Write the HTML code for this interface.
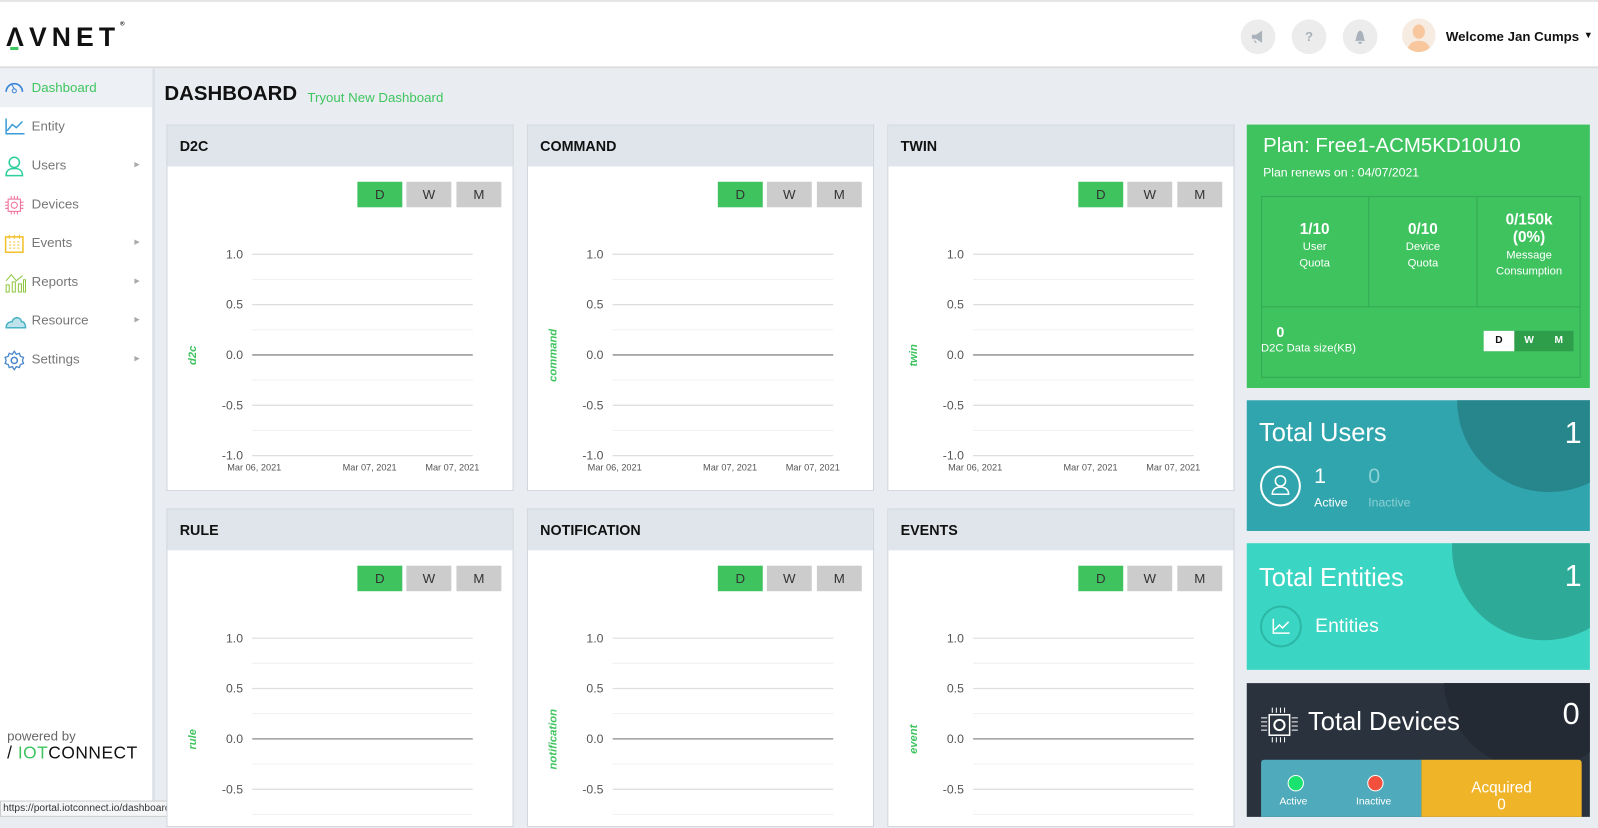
<!DOCTYPE html>
<html><head><meta charset="utf-8"><style>
*{box-sizing:border-box;margin:0;padding:0}
html,body{width:1598px;height:815px;overflow:hidden;background:#e9edf2;font-family:"Liberation Sans",sans-serif}
#w{position:absolute;left:0;top:0;width:1566px;height:800px;transform:scale(1.0211);transform-origin:0 0;background:#e9edf2}
.a{position:absolute}
#hdr{left:0;top:0;width:1566px;height:67px;background:#fff;border-top:2px solid #e6e6e6;border-bottom:2px solid #dcdcdc}
#side{left:0;top:67px;width:152px;height:733px;background:#fff;border-right:3px solid #dde2e8}
.mi{position:absolute;left:0;width:149px;height:38px;font-size:13px;color:#777;padding-left:31px;line-height:38px}
.mi svg{position:absolute;left:4px;top:10px}
.arr{position:absolute;right:12px;top:0;font-size:7px;color:#aaa}
.card{position:absolute;width:340px;background:#fff;border:1px solid #cfd5db}
.ch{height:40px;background:#dfe5ea;font-size:14px;font-weight:bold;color:#111;padding:12px 0 0 12px}
.btn{position:absolute;top:55px;height:25px;width:44px;text-align:center;line-height:25px;font-size:13px;color:#333;background:#cccccc}
.ic{position:absolute;top:17px;width:34px;height:34px;border-radius:50%;background:#ececec}
</style></head><body><div id="w">
<div id="hdr" class="a">
 <div class="a" style="left:6px;top:19px;font-size:26px;font-weight:bold;letter-spacing:5px;color:#111">ΛVNET<span style="font-size:6px;vertical-align:top">®</span></div>
 <div class="a" style="left:10px;top:44px;width:8px;height:3px;background:#3fc55f"></div>
 <div class="ic" style="left:1215px"><svg width="34" height="34"><path d="M11 15h4l6-4v12l-6-4h-4z M13 19l1 4h2" fill="#a9b2ba"/></svg></div>
 <div class="ic" style="left:1265px;text-align:center;line-height:34px;font-weight:bold;font-size:13px;color:#a9b2ba">?</div>
 <div class="ic" style="left:1315px"><svg width="34" height="34"><path d="M12 21c2-2 1-9 5-10 4 1 3 8 5 10z M15 22a2 2 0 0 0 4 0" fill="#a9b2ba"/></svg></div>
 <div class="a" style="left:1373px;top:16px;width:33px;height:33px;border-radius:50%;background:#f6ece2;overflow:hidden"><svg width="33" height="33"><ellipse cx="16.5" cy="13" rx="6" ry="7" fill="#f8c79e"/><path d="M5 33c1-9 6-11 11.5-11S27 24 28 33z" fill="#f8c79e"/></svg></div>
 <div class="a" style="left:1416px;top:26px;font-size:13px;font-weight:bold;color:#111">Welcome Jan Cumps</div>
 <div class="a" style="left:1551px;top:27px;font-size:9px;color:#111">▼</div>
</div>
<div id="side" class="a">
 <div class="mi" style="top:0;background:#edf1f5;color:#3fc55f">Dashboard<svg width="20" height="16"><path d="M2 13a8 8 0 1 1 16 0" stroke="#3a84d6" stroke-width="1.6" fill="none"/><circle cx="10" cy="12" r="2" stroke="#3a84d6" fill="none"/><path d="M10 10l-3-5" stroke="#3a84d6"/></svg></div>
 <div class="mi" style="top:38px">Entity<svg width="20" height="18"><path d="M2 1v15h18M3 13l5-6 4 3 6-6" stroke="#3a9bd6" stroke-width="1.5" fill="none"/></svg></div>
 <div class="mi" style="top:76px">Users<span class="arr">▶</span><svg width="20" height="20"><circle cx="10" cy="6" r="5" stroke="#2bcf9c" stroke-width="1.5" fill="none"/><path d="M2 19c0-6 4-7 8-7s8 1 8 7z" stroke="#2bcf9c" stroke-width="1.5" fill="none"/></svg></div>
 <div class="mi" style="top:114px">Devices<svg width="20" height="20"><rect x="4" y="4" width="12" height="12" stroke="#ef6f9a" fill="none"/><circle cx="10" cy="10" r="3" stroke="#ef6f9a" fill="none"/><path d="M7 1v3M10 1v3M13 1v3M7 16v3M10 16v3M13 16v3M1 7h3M1 10h3M1 13h3M16 7h3M16 10h3M16 13h3" stroke="#ef6f9a"/></svg></div>
 <div class="mi" style="top:152px">Events<span class="arr">▶</span><svg width="20" height="20"><rect x="1.5" y="3" width="17" height="15" stroke="#f4c12a" stroke-width="1.5" fill="none"/><path d="M5 1v4M10 1v4M15 1v4M5 8h2M9 8h2M13 8h2M5 11h2M9 11h2M13 11h2M5 14h2M9 14h2M13 14h2" stroke="#f4c12a"/></svg></div>
 <div class="mi" style="top:190px">Reports<span class="arr">▶</span><svg width="22" height="20"><path d="M2 12h3v7H2zM8 9h3v10H8zM14 11h3v8h-3zM19 7h2v12h-2zM2 8l5-6 5 6 6-5" stroke="#8dc63f" fill="none"/></svg></div>
 <div class="mi" style="top:228px">Resource<span class="arr">▶</span><svg width="22" height="20"><path d="M2 16c0-5 4-6 6-6 0-4 8-6 9 0 3 0 4 3 4 6z" stroke="#4ab3c6" stroke-width="1.5" fill="#bfe3ea"/></svg></div>
 <div class="mi" style="top:266px">Settings<span class="arr">▶</span><svg width="20" height="20"><circle cx="10" cy="10" r="3" stroke="#4a88c9" stroke-width="1.5" fill="none"/><path d="M10 1l2 3 3-1 1 3 3 1-1 3 1 3-3 1-1 3-3-1-2 3-2-3-3 1-1-3-3-1 1-3-1-3 3-1 1-3 3 1z" stroke="#4a88c9" stroke-width="1.3" fill="none"/></svg></div>
 <div class="a" style="left:7px;top:646px;font-size:13px;color:#666">powered by</div>
 <div class="a" style="left:7px;top:661px;font-size:17px;color:#111;letter-spacing:0.5px">/ <span style="color:#3fc55f">IOT</span>CONNECT</div>
</div>
<div class="a" style="left:0;top:784px;width:168px;height:16px;background:#f5f6f7;border:1px solid #ccc;font-size:10px;color:#333;padding:1px 2px;white-space:nowrap;overflow:hidden">https://portal.iotconnect.io/dashboard</div>
<div class="a" style="left:161px;top:81px;font-size:20px;font-weight:bold;color:#111">DASHBOARD</div>
<div class="a" style="left:301px;top:88px;font-size:13px;color:#3fc55f">Tryout New Dashboard</div>

<div id="cards"></div>

<div class="a" style="left:1221px;top:122px;width:336px;height:258px;background:#3fc35f;color:#fff">
 <div class="a" style="left:16px;top:10px;font-size:20px">Plan: Free1-ACM5KD10U10</div>
 <div class="a" style="left:16px;top:40px;font-size:12px">Plan renews on : 04/07/2021</div>
 <div class="a" style="left:14px;top:70px;width:313px;height:178px;border:1px solid #34a853"></div>
 <div class="a" style="left:14px;top:70px;width:106px;height:109px;border-right:1px solid #34a853;border-bottom:1px solid #34a853;text-align:center;padding-top:25px;font-size:11px;line-height:16px"><b style="font-size:15px">1/10</b><br>User<br>Quota</div>
 <div class="a" style="left:120px;top:70px;width:106px;height:109px;border-right:1px solid #34a853;border-bottom:1px solid #34a853;text-align:center;padding-top:25px;font-size:11px;line-height:16px"><b style="font-size:15px">0/10</b><br>Device<br>Quota</div>
 <div class="a" style="left:226px;top:70px;width:101px;height:109px;border-bottom:1px solid #34a853;text-align:center;padding-top:16px;font-size:11px;line-height:16px"><b style="font-size:15px">0/150k<br>(0%)</b><br>Message<br>Consumption</div>
 <div class="a" style="left:29px;top:195px;font-size:14px;font-weight:bold">0</div>
 <div class="a" style="left:14px;top:213px;font-size:11px">D2C Data size(KB)</div>
 <div class="a" style="left:232px;top:202px;width:88px;height:20px;background:#2f9e4b;font-size:10px;font-weight:bold;line-height:20px"><span class="a" style="left:0;width:30px;height:20px;background:#fff;color:#111;text-align:center">D</span><span class="a" style="left:30px;width:29px;text-align:center">W</span><span class="a" style="left:59px;width:29px;text-align:center">M</span></div>
</div>
<div class="a" style="left:1221px;top:392px;width:336px;height:128px;background:#31a5ad;color:#fff;overflow:hidden">
 <div class="a" style="left:206px;top:-90px;width:180px;height:180px;border-radius:50%;background:#27868c"></div>
 <div class="a" style="left:12px;top:18px;font-size:25px">Total Users</div>
 <div class="a" style="right:8px;top:16px;font-size:30px">1</div>
 <div class="a" style="left:13px;top:64px;width:40px;height:40px;border-radius:50%;border:2px solid #fff"><svg width="36" height="36"><circle cx="18" cy="13" r="5" stroke="#fff" stroke-width="1.5" fill="none"/><path d="M10 26c0-5 4-7 8-7s8 2 8 7z" stroke="#fff" stroke-width="1.5" fill="none"/></svg></div>
 <div class="a" style="left:66px;top:63px;font-size:21px">1</div>
 <div class="a" style="left:66px;top:93px;font-size:12px">Active</div>
 <div class="a" style="left:119px;top:63px;font-size:21px;color:#8ad0d4">0</div>
 <div class="a" style="left:119px;top:93px;font-size:12px;color:#8ad0d4">Inactive</div>
</div>
<div class="a" style="left:1221px;top:532px;width:336px;height:124px;background:#3ad5c3;color:#fff;overflow:hidden">
 <div class="a" style="left:201px;top:-85px;width:180px;height:180px;border-radius:50%;background:#2eaa99"></div>
 <div class="a" style="left:12px;top:20px;font-size:25px">Total Entities</div>
 <div class="a" style="right:8px;top:16px;font-size:30px">1</div>
 <div class="a" style="left:13px;top:61px;width:41px;height:41px;border-radius:50%;border:2px solid #2db8a6"><svg width="37" height="37"><path d="M11 11v14h16M12 22l5-5 3 3 6-6" stroke="#fff" stroke-width="1.5" fill="none"/></svg></div>
 <div class="a" style="left:67px;top:71px;font-size:19px">Entities</div>
</div>
<div class="a" style="left:1221px;top:669px;width:336px;height:131px;background:#29323d;color:#fff;overflow:hidden">
 <div class="a" style="left:193px;top:-95px;width:180px;height:180px;border-radius:50%;background:#232a33"></div>
 <svg class="a" style="left:13px;top:22px" width="40" height="40"><rect x="9" y="9" width="20" height="20" stroke="#fff" stroke-width="1.5" fill="none"/><circle cx="19" cy="19" r="5" stroke="#fff" stroke-width="2" fill="none"/><path d="M12 2v5M16 2v5M20 2v5M24 2v5M12 31v5M16 31v5M20 31v5M24 31v5M1 12h6M1 16h6M1 20h6M1 24h6M31 12h6M31 16h6M31 20h6M31 24h6" stroke="#fff"/></svg>
 <div class="a" style="left:60px;top:24px;font-size:25px">Total Devices</div>
 <div class="a" style="right:10px;top:14px;font-size:30px">0</div>
 <div class="a" style="left:14px;top:75px;width:157px;height:70px;background:#4faabb;border-radius:3px 0 0 0"></div>
 <div class="a" style="left:40px;top:90px;width:16px;height:16px;border-radius:50%;background:#19e36e;border:1px solid #fff"></div>
 <div class="a" style="left:118px;top:90px;width:16px;height:16px;border-radius:50%;background:#f2503d;border:1px solid #fff"></div>
 <div class="a" style="left:32px;top:111px;font-size:10px">Active</div>
 <div class="a" style="left:107px;top:111px;font-size:10px">Inactive</div>
 <div class="a" style="left:171px;top:75px;width:157px;height:70px;background:#f0b429;border-radius:0 3px 0 0;text-align:center;padding-top:19px;font-size:15px">Acquired<br>0</div>
</div>
</div>
<script>
var defs=[["D2C","d2c",163,122],["COMMAND","command",516,122],["TWIN","twin",869,122],["RULE","rule",163,498],["NOTIFICATION","notification",516,498],["EVENTS","event",869,498]];
var h="";
defs.forEach(function(d){
 var ht=d[3]==122?359:312;
 var s='<div class="card" style="left:'+d[2]+'px;top:'+d[3]+'px;height:'+ht+'px"><div class="ch">'+d[0]+'</div>';
 s+='<div class="btn" style="left:186px;background:#3fc35f">D</div><div class="btn" style="left:234px">W</div><div class="btn" style="left:283px">M</div>';
 s+='<svg class="a" style="left:0;top:0" width="340" height="'+ht+'">';
 var vals=["1.0","0.5","0.0","-0.5","-1.0"];
 for(var i=0;i<5;i++){var y=126+i*49.3;
  s+='<line x1="83" x2="299" y1="'+y+'" y2="'+y+'" stroke="'+(i==2?'#888':'#ddd')+'" stroke-width="'+(i==2?1.3:1.2)+'"/>';
  if(i<4)s+='<line x1="83" x2="299" y1="'+(y+24.6)+'" y2="'+(y+24.6)+'" stroke="#f0f0f0"/>';
  s+='<text x="74" y="'+(y+4)+'" text-anchor="end" font-size="12" fill="#555" font-family="Liberation Sans">'+vals[i]+'</text>';}
 s+='<text x="85" y="338" text-anchor="middle" font-size="9" fill="#555" font-family="Liberation Sans">Mar 06, 2021</text>';
 s+='<text x="198" y="338" text-anchor="middle" font-size="9" fill="#555" font-family="Liberation Sans">Mar 07, 2021</text>';
 s+='<text x="279" y="338" text-anchor="middle" font-size="9" fill="#555" font-family="Liberation Sans">Mar 07, 2021</text>';
 s+='<text transform="translate(28,225) rotate(-90)" text-anchor="middle" font-size="11" font-weight="bold" font-style="italic" fill="#3fc35f" font-family="Liberation Sans">'+d[1]+'</text>';
 s+='</svg></div>';h+=s;});
document.getElementById("cards").innerHTML=h;
</script>
</body></html>
